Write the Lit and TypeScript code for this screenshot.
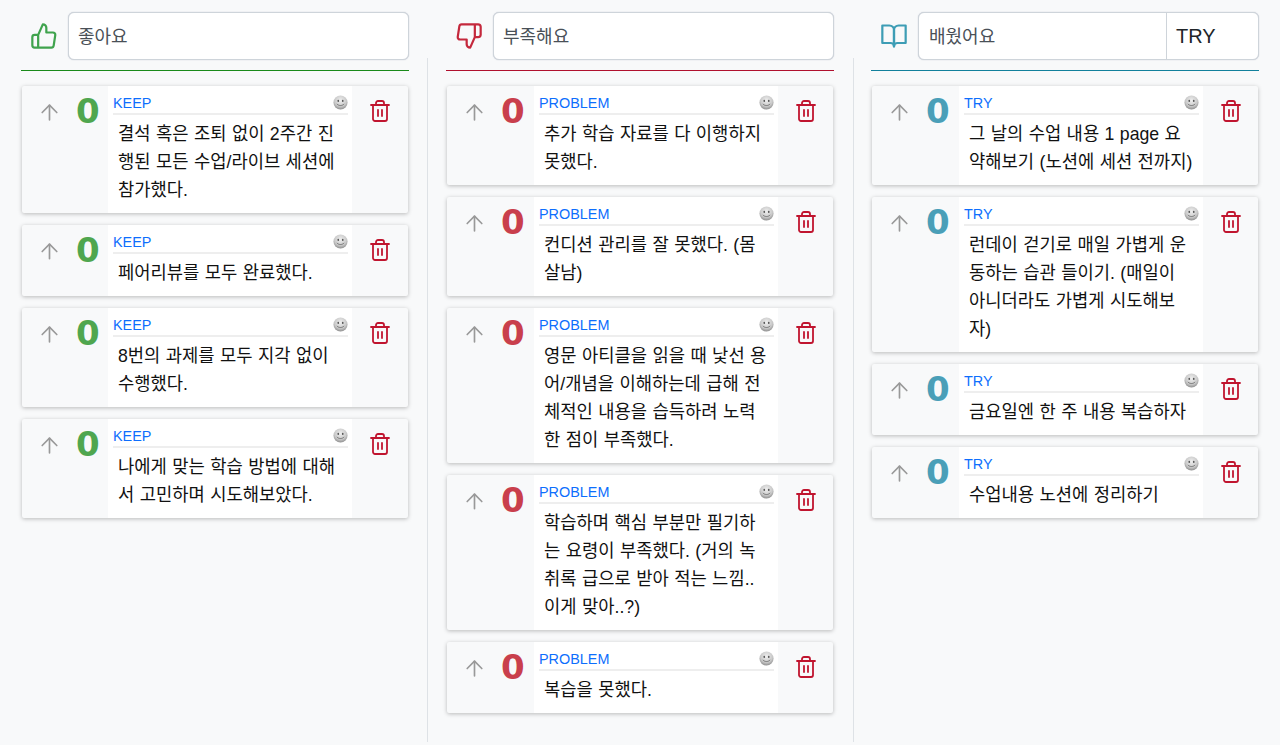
import { LitElement, html, css, svg } from 'lit';
import { customElement, property } from 'lit/decorators.js';

const FONT = css`"Liberation Sans", "Noto Sans CJK KR", sans-serif`;

const icons = {
  up: svg`<path d="M14 9V5a3 3 0 0 0-3-3l-4 9v11h11.28a2 2 0 0 0 2-1.7l1.38-9a2 2 0 0 0-2-2.3zM7 22H4a2 2 0 0 1-2-2v-7a2 2 0 0 1 2-2h3"></path>`,
  down: svg`<path d="M10 15v4a3 3 0 0 0 3 3l4-9V2H5.72a2 2 0 0 0-2 1.7l-1.38 9a2 2 0 0 0 2 2.3zm7-13h2.67A2.31 2.31 0 0 1 22 4v7a2.31 2.31 0 0 1-2.33 2H17"></path>`,
  book: svg`<path d="M2 3h6a4 4 0 0 1 4 4v14a3 3 0 0 0-3-3H2z"></path><path d="M22 3h-6a4 4 0 0 0-4 4v14a3 3 0 0 1 3-3h7z"></path>`,
  arrow: svg`<line x1="12" y1="19" x2="12" y2="5"></line><polyline points="5 12 12 5 19 12"></polyline>`,
  trash: svg`<polyline points="3 6 5 6 21 6"></polyline><path d="M19 6v14a2 2 0 0 1-2 2H7a2 2 0 0 1-2-2V6m3 0V4a2 2 0 0 1 2-2h4a2 2 0 0 1 2 2v2"></path><line x1="10" y1="11" x2="10" y2="17"></line><line x1="14" y1="11" x2="14" y2="17"></line>`,
};

const icon = (name: keyof typeof icons, cls: string) => html`
  <svg class=${cls} viewBox="0 0 24 24" fill="none" stroke="currentColor" stroke-linecap="round" stroke-linejoin="round">${icons[name]}</svg>
`;

const smiley = html`
  <svg class="smiley" viewBox="0 0 16 16">
    <defs>
      <radialGradient id="face" cx="50%" cy="35%" r="65%">
        <stop offset="0" stop-color="#efefef"></stop>
        <stop offset="0.65" stop-color="#c9c9c9"></stop>
        <stop offset="1" stop-color="#8e8e8e"></stop>
      </radialGradient>
    </defs>
    <circle cx="8" cy="8" r="7.5" fill="url(#face)"></circle>
    <ellipse cx="5.6" cy="6.3" rx="0.9" ry="1.2" fill="#555"></ellipse>
    <ellipse cx="10.4" cy="6.3" rx="0.9" ry="1.2" fill="#555"></ellipse>
    <path d="M4.4 9.8c1.8 2 5.4 2 7.2 0" fill="none" stroke="#666" stroke-width="0.9" stroke-linecap="round"></path>
  </svg>
`;

@customElement('retro-card')
class RetroCard extends LitElement {
  @property() label = '';
  @property() text = '';
  @property() tone = 'keep';

  static styles = css`
    :host {
      display: block;
    }
    .card {
      display: flex;
      margin: 0 1px;
      background: #f8f9fa;
      border-radius: 2px;
      box-shadow: 0 1px 4px rgba(0, 0, 0, 0.26);
    }
    .vote {
      width: 86px;
      flex: none;
      display: flex;
      align-items: flex-start;
    }
    .problem .vote,
    .try .vote {
      width: 87px;
    }
    .arrow {
      width: 25px;
      height: 25px;
      margin: 14px 0 0 15px;
      color: #999;
      stroke-width: 1.6;
    }
    .score {
      margin: 7px 0 0 14px;
      font: bold 34px/36px "DejaVu Sans", sans-serif;
    }
    .keep .score { color: #4fa64f; }
    .problem .score { color: #c93f4c; }
    .try .score { color: #4a9fb8; }
    .panel {
      width: 244px;
      flex: none;
      box-sizing: border-box;
      background: #fff;
      padding: 0 4px 9px 5px;
    }
    .meta {
      display: flex;
      justify-content: space-between;
      align-items: flex-start;
      height: 29px;
      box-sizing: border-box;
      border-bottom: 2px solid #eee;
      padding-top: 8px;
      color: #0d6efd;
      font: 14.4px/18px ${FONT};
    }
    .smiley {
      width: 15px;
      height: 15px;
      margin-top: 0.5px;
    }
    .text {
      margin: 5px 0 0;
      padding: 0 5px;
      color: #111;
      font: 17.7px/28px ${FONT};
      word-spacing: 0.5px;
      word-break: break-all;
    }
    .remove {
      flex: 1;
      display: flex;
      justify-content: center;
      align-items: flex-start;
      padding-top: 13px;
    }
    .trash {
      width: 24px;
      height: 24px;
      color: #c0152f;
      stroke-width: 1.8;
    }
  `;

  render() {
    return html`
      <div class="card ${this.tone}">
        <div class="vote">
          ${icon('arrow', 'arrow')}
          <span class="score">0</span>
        </div>
        <div class="panel">
          <div class="meta"><span>${this.label}</span>${smiley}</div>
          <p class="text">${this.text}</p>
        </div>
        <div class="remove">${icon('trash', 'trash')}</div>
      </div>
    `;
  }
}

const columns = [
  {
    tone: 'keep',
    icon: 'up' as const,
    title: '좋아요',
    label: 'KEEP',
    cards: [
      '결석 혹은 조퇴 없이 2주간 진행된 모든 수업/라이브 세션에 참가했다.',
      '페어리뷰를 모두 완료했다.',
      '8번의 과제를 모두 지각 없이 수행했다.',
      '나에게 맞는 학습 방법에 대해서 고민하며 시도해보았다.',
    ],
  },
  {
    tone: 'problem',
    icon: 'down' as const,
    title: '부족해요',
    label: 'PROBLEM',
    cards: [
      '추가 학습 자료를 다 이행하지 못했다.',
      '컨디션 관리를 잘 못했다. (몸살남)',
      '영문 아티클을 읽을 때 낯선 용어/개념을 이해하는데 급해 전체적인 내용을 습득하려 노력한 점이 부족했다.',
      '학습하며 핵심 부분만 필기하는 요령이 부족했다. (거의 녹취록 급으로 받아 적는 느낌.. 이게 맞아..?)',
      '복습을 못했다.',
    ],
  },
  {
    tone: 'try',
    icon: 'book' as const,
    title: '배웠어요',
    label: 'TRY',
    addon: 'TRY',
    cards: [
      '그 날의 수업 내용 1 page 요약해보기 (노션에 세션 전까지)',
      '런데이 걷기로 매일 가볍게 운동하는 습관 들이기. (매일이 아니더라도 가볍게 시도해보자)',
      '금요일엔 한 주 내용 복습하자',
      '수업내용 노션에 정리하기',
    ],
  },
];

@customElement('app-root')
class AppRoot extends LitElement {
  static styles = css`
    :host {
      display: block;
      min-height: 745px;
      background: #f8f9fa;
      font-family: ${FONT};
    }
    .board {
      display: flex;
      min-height: 742px;
      padding-left: 21px;
    }
    .column {
      width: 388px;
      flex: none;
    }
    .rule {
      width: 1px;
      flex: none;
      margin: 58px 18px 0;
      background: #dee2e6;
    }
    .rule.second {
      margin: 58px 17px 0 19px;
    }
    .head {
      display: flex;
      align-items: center;
      height: 48px;
      padding: 12px 0 10px;
      border-bottom: 1px solid;
      margin-bottom: 15px;
    }
    .keep .head { border-color: #1a8a1a; }
    .problem .head { border-color: #b0102e; }
    .try .head { border-color: #12809c; }
    .glyph {
      width: 28px;
      height: 28px;
      margin-left: 9px;
      flex: none;
      stroke-width: 1.9;
    }
    .keep .glyph { color: #3fa34d; }
    .problem .glyph { color: #c4283c; }
    .try .glyph { color: #3d9db5; }
    .field {
      flex: 1;
      display: flex;
      height: 48px;
      box-sizing: border-box;
      margin-left: 10px;
      background: #fff;
      border: 1px solid #ced4da;
      border-radius: 6px;
      box-shadow: 0 0 1px rgba(100, 110, 140, 0.5);
      color: #495057;
      font-size: 18px;
      line-height: 48px;
    }
    .name {
      flex: 1;
      padding-left: 9px;
    }
    .try .name {
      padding-left: 10px;
    }
    .addon {
      width: 92px;
      padding-left: 9px;
      box-sizing: border-box;
      border-left: 1px solid #ced4da;
      color: #212529;
      font-size: 20px;
      line-height: 46px;
    }
    .cards {
      display: flex;
      flex-direction: column;
      gap: 12px;
    }
  `;

  render() {
    return html`
      <div class="board">
        ${columns.map(
          (col, i) => html`
            ${i > 0 ? html`<div class="rule ${i === 2 ? 'second' : ''}"></div>` : ''}
            <section class="column ${col.tone}">
              <div class="head">
                ${icon(col.icon, 'glyph')}
                <div class="field">
                  <span class="name">${col.title}</span>
                  ${col.addon ? html`<span class="addon">${col.addon}</span>` : ''}
                </div>
              </div>
              <div class="cards">
                ${col.cards.map(
                  (text) => html`<retro-card .label=${col.label} .text=${text} .tone=${col.tone}></retro-card>`,
                )}
              </div>
            </section>
          `,
        )}
      </div>
    `;
  }
}
